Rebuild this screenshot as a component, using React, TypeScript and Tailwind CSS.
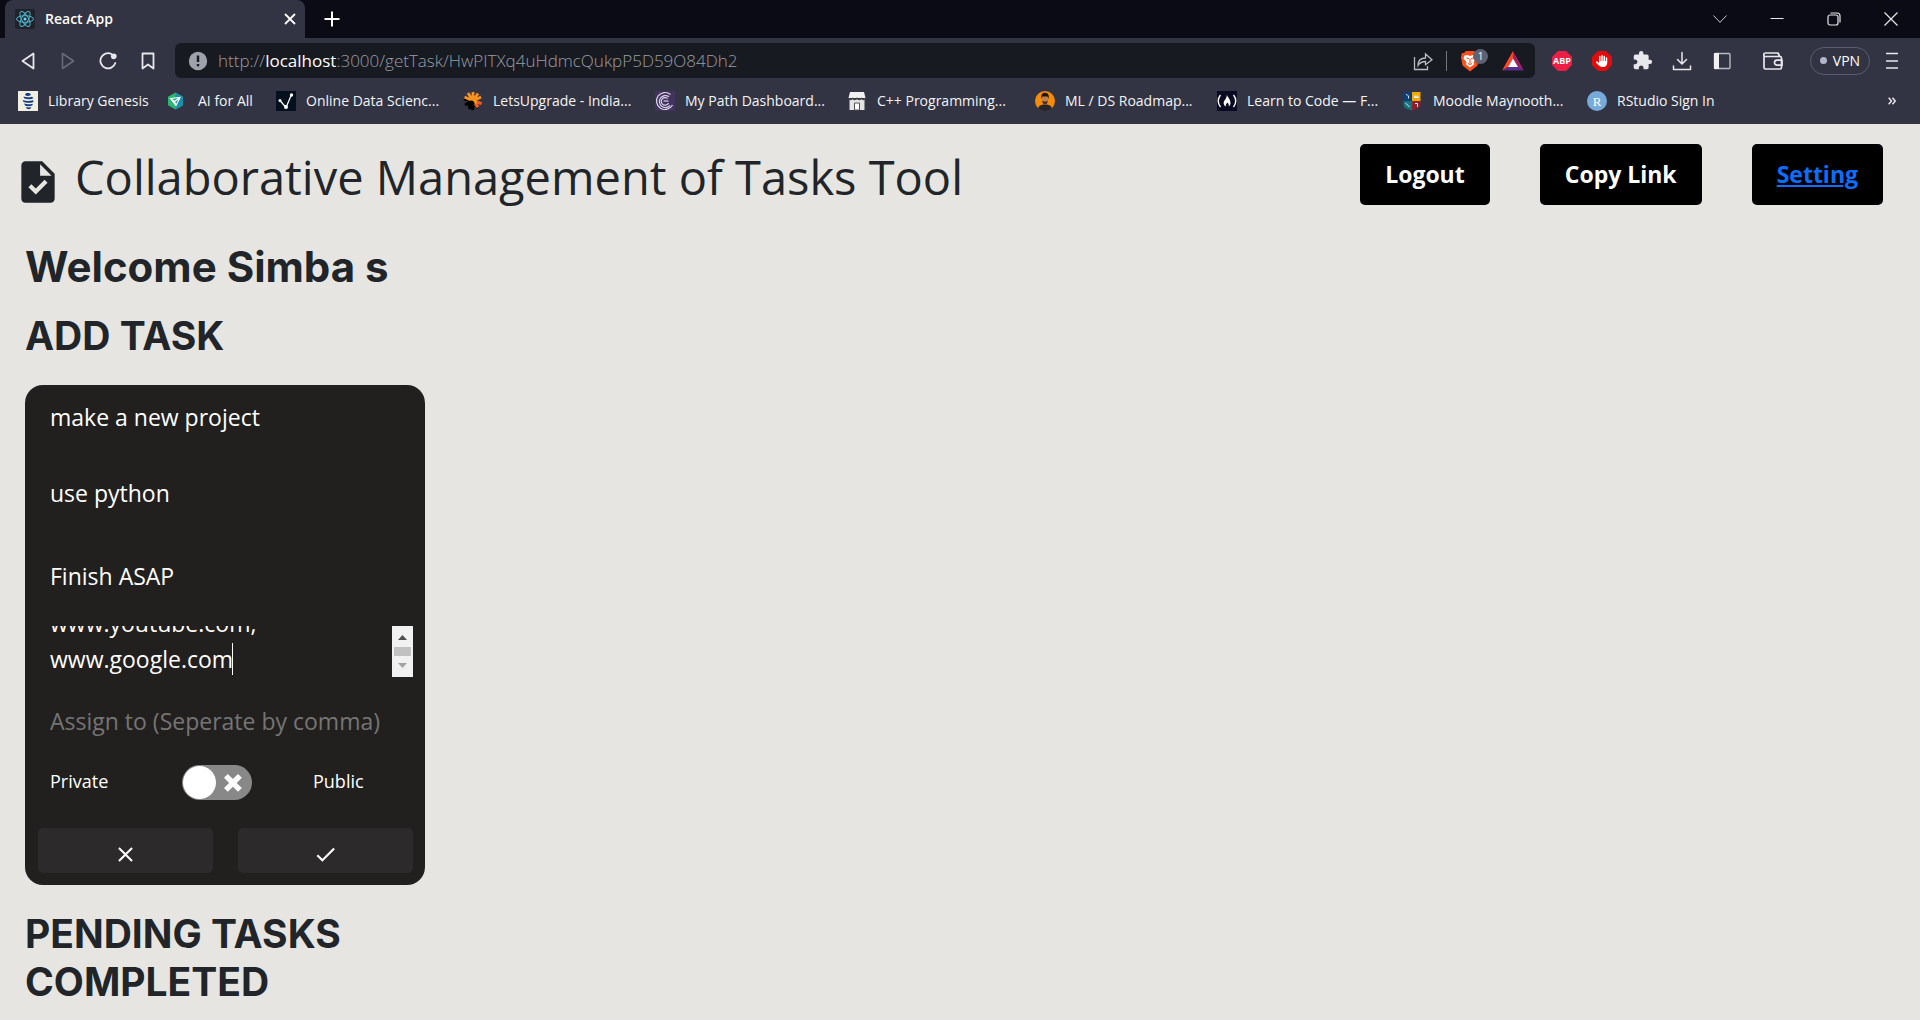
import { useState, type ReactNode } from 'react';
import { FaHand } from 'react-icons/fa6';

function ReactLogo() {
  return (
    <svg viewBox="0 0 20 20" className="size-5 shrink-0" aria-hidden="true">
      <rect width="20" height="20" rx="2" fill="#20232a" />
      <g fill="none" stroke="#4fb6cf" strokeWidth="1">
        <ellipse cx="10" cy="10" rx="8.5" ry="3.3" />
        <ellipse cx="10" cy="10" rx="8.5" ry="3.3" transform="rotate(60 10 10)" />
        <ellipse cx="10" cy="10" rx="8.5" ry="3.3" transform="rotate(120 10 10)" />
      </g>
      <circle cx="10" cy="10" r="1.5" fill="#61dafb" />
    </svg>
  );
}

type Bookmark = { label: string; width: string; icon: ReactNode };

const bookmarks: Bookmark[] = [
  {
    label: 'Library Genesis',
    width: 'w-[99px]',
    icon: (
      <>
        <rect width="20" height="20" fill="#f0efe2" />
        <path
          d="M8 2.2c2-.4 4 .2 5 1.2l-1 1.2c-1.5.7-3.5.5-5-.6zM5.500 5.500c2.500 1 5.500.9 8.500.2l1.500 1.600c-2.500 1.200-6.500 1.100-9.500 0zM4.800 9c3 1.200 7.200 1.200 10.400.2l.3 1.800c-3.500 1.300-7.500 1.100-10.200-.3zM6.200 12.600c2.500 1 5.600 1 8.600.1l-.5 1.800c-2.500.9-5.300.8-7.300-.1zM7.800 16c1.700.6 3.700.6 5.400 0l-.8 1.800c-1.200.6-2.600.5-3.600 0z"
          fill="#123a86"
        />
      </>
    ),
  },
  {
    label: 'AI for All',
    width: 'w-[57px]',
    icon: (
      <>
        <path d="M7.500 1.500l7.500 4.200v8.600l-7.500 4.200L0 14.300V5.700z" fill="#2bb673" />
        <path d="M7.500 1.500l7.500 4.200v8.600l-7.500 4.200z" fill="#1d8fa8" />
        <path d="M2.500 7.500l9.500-1L8 14.500zM2.500 7.500L6.500 10.500l1.500 4M6.500 10.500L12 6.500" fill="none" stroke="#fff" strokeWidth="1.200" />
      </>
    ),
  },
  {
    label: 'Online Data Scienc...',
    width: 'w-[136px]',
    icon: (
      <>
        <rect width="20" height="20" fill="#05101f" />
        <path d="M4 9.500l6 7 5.500-13" fill="none" stroke="#fff" strokeWidth="1.200" />
        <circle cx="4" cy="9.500" r="1.500" fill="#fff" />
        <circle cx="10" cy="16" r="2" fill="#fff" />
        <circle cx="15.500" cy="4" r="1.700" fill="#fff" />
      </>
    ),
  },
  {
    label: 'LetsUpgrade - India...',
    width: 'w-[141px]',
    icon: (
      <>
        <path d="M1 8l6 1M2 14l5-3M6 18l3-6" stroke="#000" strokeWidth="3" />
        <path d="M9.500 19l1-6M15 17l-3-4" stroke="#000" strokeWidth="3" />
        <path d="M10 10L1.500 6M10 10L5 2M10 10V1M10 10l5-7.500M10 10l8-4M10 10l8.500 2.500M10 10l5 6" stroke="#f7931e" strokeWidth="2.800" />
        <path d="M10 10l8 2.500M10 10l5 6" stroke="#f15a24" strokeWidth="2.800" />
        <circle cx="10" cy="10" r="4" fill="#f7931e" />
        <circle cx="8" cy="13" r="3.500" fill="#000" />
      </>
    ),
  },
  {
    label: 'My Path Dashboard...',
    width: 'w-[141px]',
    icon: (
      <>
        <rect width="20" height="20" fill="#43345f" />
        <g fill="none" stroke="#d9d3e6" strokeWidth="1.200">
          <path d="M15.500 3.500A8.500 8.500 0 1 0 17.500 14" />
          <path d="M14 5.800A6 6 0 1 0 15 14.500" />
          <path d="M12.500 7.500A3.800 3.800 0 1 0 13.500 12" />
          <path d="M8.500 10h5" />
        </g>
      </>
    ),
  },
  {
    label: 'C++ Programming...',
    width: 'w-[137px]',
    icon: (
      <>
        <path d="M3 1h14l1.500 6H1.500z" fill="#f1f1f1" />
        <path d="M2.500 8h15v11h-15z" fill="#e3e3e3" />
        <path d="M1.500 7c1 2 3 2 4.200.3C7 9 9 9 10 7.300 11 9 13 9 14.300 7.300 15.500 9 17.500 9 18.500 7" fill="none" stroke="#444" strokeWidth="1.200" />
        <path d="M7.500 19v-7h5v7z" fill="#fff" stroke="#555" />
      </>
    ),
  },
  {
    label: 'ML / DS Roadmap...',
    width: 'w-[131px]',
    icon: (
      <>
        <circle cx="10" cy="10" r="10" fill="#f58b0a" />
        <path d="M3 17.200c1-2.700 3-3.200 5-3.700h4c2 .5 4 1 5 3.700A10 10 0 0 1 3 17.200z" fill="#24262b" />
        <path d="M7.300 7c0-2.500 5.400-2.500 5.400 0v3c0 5-5.400 5-5.400 0z" fill="#b9805d" />
        <path d="M6.500 8C5.500 2 9 1.500 11 2c3 .3 3 3.500 2.500 6l-1-2.500h-5z" fill="#20160f" />
        <path d="M7.300 9.500c1 1.500 4.400 1.500 5.400 0 0 5.500-5.400 5.500-5.400 0z" fill="#4a2c1c" />
      </>
    ),
  },
  {
    label: 'Learn to Code — F...',
    width: 'w-[135px]',
    icon: (
      <>
        <rect width="20" height="20" fill="#0a0a23" />
        <path d="M3.500 4c-3 3.500-3 8.500 0 12M16.500 4c3 3.500 3 8.500 0 12" fill="none" stroke="#fff" strokeWidth="1.400" />
        <path d="M9.800 4c1.500 2.500 3.700 5 3.700 8 0 2-1 3-2 3.500.8-1.500.2-3-1.500-4-.3 1.300-1.500 2-1 4C7 14.500 6.500 13 6.700 11.500 7.200 9 9.800 7.500 9.800 4z" fill="#fff" />
      </>
    ),
  },
  {
    label: 'Moodle Maynooth...',
    width: 'w-[133px]',
    icon: (
      <>
        <path d="M.5 1H9v9H.5z" fill="#0f3d75" />
        <path d="M9 1h8.500v9H9z" fill="#f2a900" />
        <path d="M.5 10H9v9.500c-4-1.500-8.500-2-8.500-6z" fill="#16747f" />
        <path d="M9 10h8.500v3.500c0 4-4.500 4.500-8.500 6z" fill="#8f1f2f" />
        <path d="M3 3.500c2 0 3 2 2.500 4M11 6.500l1-2 1.200 2 1.200-2 1 2zM2.500 12l4 4M12 12.500h2.500V16" fill="none" stroke="#e8edf2" />
      </>
    ),
  },
  {
    label: 'RStudio Sign In',
    width: 'w-auto',
    icon: (
      <>
        <circle cx="10" cy="10" r="10" fill="#75aadb" />
        <text x="10" y="14.500" textAnchor="middle" fontSize="13" fontFamily="Liberation Serif, serif" fill="#fff">R</text>
      </>
    ),
  },
];

function ChromeButton({ label, children }: { label: string; children: ReactNode }) {
  return (
    <button type="button" aria-label={label} className="flex h-[35px] w-10 shrink-0 items-center justify-center">
      {children}
    </button>
  );
}

function TabStrip() {
  return (
    <div className="flex h-[38px] items-stretch pl-[5px]">
      <div className="flex w-[300px] items-center rounded-t-lg bg-[#323443] pr-[9px] pl-[10px]">
        <ReactLogo />
        <span className="ml-[10px] flex-1 text-sm font-semibold text-white">React App</span>
        <button type="button" aria-label="Close tab" className="flex size-3 items-center justify-center">
          <svg viewBox="0 0 12 12" className="size-3" stroke="#fff" strokeWidth="1.800"><path d="M1 1l10 10M11 1L1 11" /></svg>
        </button>
      </div>
      <button type="button" aria-label="New tab" className="flex w-[54px] items-center justify-center">
        <svg viewBox="0 0 16 16" className="size-4" stroke="#fff" strokeWidth="2"><path d="M8 .5v15M.5 8h15" /></svg>
      </button>
      <div className="ml-auto flex items-center text-[#e8e8ea]">
        <button type="button" aria-label="Search tabs" className="flex h-full w-[57px] items-center justify-center">
          <svg viewBox="0 0 14 8" className="h-2 w-[14px]" fill="none" stroke="#c8c8cc"><path d="M.5 .5L7 7.300 13.500.5" /></svg>
        </button>
        <button type="button" aria-label="Minimize" className="flex h-full w-[57px] items-center justify-center">
          <svg viewBox="0 0 14 14" className="size-[14px]" fill="none" stroke="currentColor"><path d="M.5 6.500h13" /></svg>
        </button>
        <button type="button" aria-label="Restore" className="flex h-full w-[57px] items-center justify-center">
          <svg viewBox="0 0 14 14" className="size-[14px]" fill="none" stroke="currentColor" strokeWidth="1.200">
            <rect x="1" y="3" width="10" height="10" rx="2" />
            <path d="M3.500 1h6.500a3 3 0 0 1 3 3v6.500" />
          </svg>
        </button>
        <button type="button" aria-label="Close window" className="flex h-full w-[58px] items-center justify-center">
          <svg viewBox="0 0 14 14" className="size-[14px]" fill="none" stroke="currentColor" strokeWidth="1.200"><path d="M.5 .5l13 13M13.500.5l-13 13" /></svg>
        </button>
      </div>
    </div>
  );
}

function AddressBar() {
  return (
    <div className="ml-[7px] flex h-[35px] flex-1 items-center rounded-md bg-[#171a21] pr-[11px] pl-[13px]">
      <svg viewBox="0 0 20 20" className="size-5 shrink-0" role="img" aria-label="Not secure">
        <circle cx="10" cy="10" r="9.200" fill="#9fa1ab" />
        <path d="M10 4.500v6.500M10 13v2.200" stroke="#171a21" strokeWidth="2.400" />
      </svg>
      <div className="ml-[10px] flex-1 text-[17px] font-light whitespace-nowrap text-[#9a9ca3]">
        http://<span className="font-normal text-white">localhost</span>:3000/getTask/HwPITXq4uHdmcQukpP5D59O84Dh2
      </div>
      <button type="button" aria-label="Share page">
        <svg viewBox="0 0 20 20" className="size-5" fill="none" stroke="#b9bbc2" strokeWidth="1.300">
          <path d="M1.500 6v12.500h13V15" />
          <path d="M5 14.500c0-5 3-7.500 7.500-7.500V3l6.500 5.800-6.500 5V10.500c-3.500 0-5.500 1-7.500 4z" />
        </svg>
      </button>
      <span className="ml-[13px] h-5 w-px bg-[#74767f]" />
      <button type="button" aria-label="Brave Shields" className="relative ml-[13px] flex w-[28px] items-center">
        <svg viewBox="0 0 20 22" className="h-[22px] w-5" aria-hidden="true">
          <path d="M6 1h8l2 2 2 0 1 4-1.500 8.500L10 21.500l-7.500-6L1 7l1-4h2z" fill="#fb4f1c" />
          <path d="M4.500 5.500l3-.5L10 6l2.500-1 3 .5 1 3-3 3.800.7 2L10 17.500l-4.200-3.200.7-2-3-3.800z" fill="#fff" />
          <path d="M6.500 8l2.500.8M13.500 8L11 8.800M10 9v4M8 13.500l2 1 2-1" stroke="#fb4f1c" fill="none" strokeWidth="1.100" />
        </svg>
        <span className="absolute -top-px right-0 flex size-[15px] items-center justify-center rounded-full bg-[#5f6270] text-[10px] text-white">1</span>
      </button>
      <button type="button" aria-label="Brave Rewards" className="ml-[14px]">
        <svg viewBox="0 0 22 20" className="h-5 w-[22px]">
          <path d="M11 0L0 19.500l6-3.500 5-8.500z" fill="#ff4724" />
          <path d="M11 0l11 19.500-6-3.500-5-8.500z" fill="#9e1f63" />
          <path d="M0 19.500h22L16 16H6z" fill="#5b2d90" />
          <path d="M11 7.500L16 16H6z" fill="#fff" />
        </svg>
      </button>
    </div>
  );
}

function Toolbar() {
  return (
    <div className="flex items-center pt-[5px] pr-[18px] pl-2">
      <ChromeButton label="Back">
        <svg viewBox="0 0 14 18" className="h-[18px] w-[14px]" fill="none" stroke="#e8e8ec" strokeWidth="1.800" strokeLinejoin="round"><path d="M12.500 1.500v15L1.500 9z" /></svg>
      </ChromeButton>
      <ChromeButton label="Forward">
        <svg viewBox="0 0 14 18" className="h-[18px] w-[14px]" fill="none" stroke="#686a77" strokeWidth="1.600" strokeLinejoin="round"><path d="M1.500 1.500v15l11-7.500z" /></svg>
      </ChromeButton>
      <ChromeButton label="Reload">
        <svg viewBox="0 0 18 18" className="size-[18px]" fill="none" stroke="#e8e8ec" strokeWidth="1.800" strokeLinecap="round">
          <path d="M12.500 2A7.600 7.600 0 1 0 16.300 11" />
          <circle cx="14.800" cy="4.300" r="2" fill="#e8e8ec" />
        </svg>
      </ChromeButton>
      <ChromeButton label="Bookmark this tab">
        <svg viewBox="0 0 14 18" className="h-[18px] w-[14px]" fill="none" stroke="#e8e8ec" strokeWidth="1.800" strokeLinejoin="round"><path d="M1.500 1.500h11v15L7 12.500l-5.500 4z" /></svg>
      </ChromeButton>
      <AddressBar />
      <div className="ml-[7px] flex items-center">
        <ChromeButton label="Adblock Plus">
          <svg viewBox="0 0 20 20" className="size-5">
            <path d="M6 0h8l6 6v8l-6 6H6l-6-6V6z" fill="#ed1e45" />
            <text x="10" y="13.300" textAnchor="middle" fontSize="9" fontWeight="700" fontFamily="Open Sans, sans-serif" fill="#fff">ABP</text>
          </svg>
        </ChromeButton>
        <ChromeButton label="AdBlock">
          <span className="grid place-items-center *:[grid-area:1/1]">
            <svg viewBox="0 0 20 20" className="size-5"><path d="M6 0h8l6 6v8l-6 6H6l-6-6V6z" fill="#e30b0b" /></svg>
            <FaHand className="size-3 text-white" />
          </span>
        </ChromeButton>
        <ChromeButton label="Extensions">
          <svg viewBox="0 0 24 24" className="size-[21px]" fill="#e8e8ec"><path d="M20.500 11H19V7c0-1.100-.9-2-2-2h-4V3.500a2.500 2.500 0 0 0-5 0V5H4c-1.100 0-1.990.9-1.990 2v3.800H3.500c1.490 0 2.700 1.210 2.700 2.700s-1.210 2.700-2.700 2.700H2V20c0 1.100.9 2 2 2h3.800v-1.500c0-1.490 1.210-2.700 2.700-2.700s2.700 1.210 2.700 2.700V22H17c1.100 0 2-.9 2-2v-4h1.500a2.500 2.500 0 0 0 0-5z" /></svg>
        </ChromeButton>
        <ChromeButton label="Downloads">
          <svg viewBox="0 0 20 20" className="size-5" fill="none" stroke="#e8e8ec" strokeWidth="1.500" strokeLinecap="round" strokeLinejoin="round"><path d="M10 1.500v11M5.500 8.500l4.500 4.500 4.500-4.500M1.500 15v3.500h17V15" /></svg>
        </ChromeButton>
        <ChromeButton label="Sidebar">
          <svg viewBox="0 0 18 18" className="size-[18px]"><rect x="1.500" y="1.500" width="15.500" height="15" rx="1" fill="none" stroke="#b9bbc4" strokeWidth="1.400" /><path d="M1 1h5v16H1z" fill="#f0f0f2" /></svg>
        </ChromeButton>
      </div>
      <div className="ml-[11px] flex items-center">
        <ChromeButton label="Wallet">
          <svg viewBox="0 0 20 18" className="h-[18px] w-5" fill="none" stroke="#e8e8ec" strokeWidth="1.700" strokeLinejoin="round">
            <path d="M1 3v12.500a1.500 1.500 0 0 0 1.500 1.500H17a1.500 1.500 0 0 0 1.500-1.500V6A1.500 1.500 0 0 0 17 4.500H2.500A1.500 1.500 0 0 1 2.500 1H15l1.500 3" />
            <path d="M19 8.200h-5a2.500 2.500 0 0 0 0 5h5z" />
          </svg>
        </ChromeButton>
        <button type="button" className="ml-[17px] flex h-7 w-[60px] items-center justify-center gap-[6px] rounded-full border border-[#5b5d70] text-sm text-white">
          <span className="size-[7px] rounded-full bg-[#b4b5c8]" />
          VPN
        </button>
        <button type="button" aria-label="Menu" className="ml-[12px] flex h-[35px] w-5 items-center justify-center">
          <svg viewBox="0 0 12 18" className="h-[18px] w-3" stroke="#e8e8ec" strokeWidth="1.700"><path d="M0 1.500h12M0 9h12M0 16h12" /></svg>
        </button>
      </div>
    </div>
  );
}

function BookmarksBar() {
  return (
    <nav aria-label="Bookmarks" className="flex h-[46px] items-center pr-6 pl-[18px]">
      <div className="flex items-center gap-[21px]">
        {bookmarks.map((b) => (
          <a key={b.label} href="#" className="flex items-center gap-[10px] text-sm whitespace-nowrap text-[#f4f4f6]">
            <svg viewBox="0 0 20 20" className="size-5 shrink-0" aria-hidden="true">{b.icon}</svg>
            <span className={b.width}>{b.label}</span>
          </a>
        ))}
      </div>
      <button type="button" aria-label="More bookmarks" className="ml-auto">
        <svg viewBox="0 0 8 8" className="size-2" fill="none" stroke="#e8e8ec" strokeWidth="1.500"><path d="M.7.7L3.500 4 .7 7.300M4.500.7L7.300 4 4.500 7.300" /></svg>
      </button>
    </nav>
  );
}

const actionClass = 'flex h-[61px] items-center rounded-[5px] bg-black px-[25px] text-[23px] font-bold whitespace-nowrap';
const fieldClass = 'block w-full bg-transparent px-[25px] text-[23px] text-white outline-none placeholder:text-[#757575]';

function TaskCard() {
  const [isPublic, setIsPublic] = useState(false);
  return (
    <form className="mt-[25px] w-[400px] rounded-[18px] bg-[#22201f] pb-3" onSubmit={(e) => e.preventDefault()}>
      <input aria-label="Title" defaultValue="make a new project" className={`${fieldClass} h-16`} />
      <input aria-label="Description" defaultValue="use python" className={`${fieldClass} h-[88px]`} />
      <input aria-label="Note" defaultValue="Finish ASAP" className={`${fieldClass} h-[78px]`} />
      <div className="relative mt-[11px] mr-3 flex h-[51px]">
        <textarea
          aria-label="Links"
          defaultValue={'www.youtube.com,\nwww.google.com'}
          ref={(el) => {
            if (el) el.scrollTop = 21;
          }}
          className={`${fieldClass} h-full resize-none leading-[36px] [scrollbar-width:none]`}
        />
        <span className="absolute top-[17px] left-[207px] h-8 w-px bg-white" />
        <div className="flex w-[21px] shrink-0 flex-col items-center justify-between bg-[#f1f1f1] py-[9px]" aria-hidden="true">
          <svg viewBox="0 0 9 5" className="h-[5px] w-[9px]"><path d="M0 5L4.500 0 9 5z" fill="#505050" /></svg>
          <span className="h-[9px] w-[17px] bg-[#c1c1c1]" />
          <svg viewBox="0 0 9 5" className="h-[5px] w-[9px]"><path d="M0 0l4.500 5L9 0z" fill="#a3a3a3" /></svg>
        </div>
      </div>
      <input aria-label="Assign to" placeholder="Assign to (Seperate by comma)" className={`${fieldClass} h-[88px]`} />
      <div className="flex h-[35px] items-center pl-[25px] text-lg text-white">
        <span className="w-[132px] pb-1">Private</span>
        <label className="relative flex h-[35px] w-[70px] items-center rounded-full bg-[#888888] has-checked:bg-[#008800]">
          <input type="checkbox" role="switch" aria-label="Public" checked={isPublic} onChange={(e) => setIsPublic(e.target.checked)} className="peer sr-only" />
          <span className="ml-px size-[33px] rounded-full bg-white peer-checked:ml-9" />
          <svg viewBox="0 0 10 10" className="ml-2 size-[18px] peer-checked:hidden" aria-hidden="true">
            <path d="M9.900 2.120L7.780 0 4.950 2.828 2.120 0 0 2.120l2.830 2.830L0 7.776 2.123 9.900 4.950 7.070 7.780 9.900 9.900 7.776 7.072 4.950 9.900 2.120" fill="#fff" />
          </svg>
        </label>
        <span className="ml-[61px] pb-1">Public</span>
      </div>
      <div className="mt-7 grid grid-cols-2 gap-[25px] pr-3 pl-[13px]">
        <button type="button" aria-label="Cancel" className="flex h-[45px] items-center justify-center rounded-[5px] bg-[#2d2a2b] pt-2">
          <svg viewBox="0 0 24 24" className="size-[25px]" fill="#fff"><path d="M19 6.410L17.590 5 12 10.590 6.410 5 5 6.410 10.590 12 5 17.590 6.410 19 12 13.410 17.590 19 19 17.590 13.410 12z" /></svg>
        </button>
        <button type="submit" aria-label="Save task" className="flex h-[45px] items-center justify-center rounded-[5px] bg-[#2d2a2b] pt-2">
          <svg viewBox="0 0 24 24" className="size-[25px]" fill="#fff"><path d="M9 16.170L4.830 12l-1.420 1.410L9 19 21 7l-1.410-1.410z" /></svg>
        </button>
      </div>
    </form>
  );
}

export default function App() {
  return (
    <div className="min-h-screen bg-[#e6e5e1] font-['Open_Sans','Noto_Sans',sans-serif] text-[#212529]">
      <header className="bg-[#0a0b14]">
        <TabStrip />
        <div className="bg-[#323443]">
          <Toolbar />
          <BookmarksBar />
        </div>
      </header>
      <main>
        <div className="flex items-start justify-between gap-12 pt-5 pr-[37px] pl-[13px]">
          <div className="flex items-start gap-3">
            <svg viewBox="0 0 24 24" className="mt-[13px] size-[50px] shrink-0" fill="currentColor" aria-hidden="true">
              <path d="M14 2H6c-1.100 0-1.990.9-1.990 2L4 20c0 1.100.89 2 1.990 2H18c1.100 0 2-.9 2-2V8l-6-6zm-3.060 16L7.400 14.460l1.410-1.410 2.120 2.120 4.240-4.240 1.410 1.410L10.940 18zM13 9V3.500L18.500 9H13z" />
            </svg>
            <h1 className="text-[47px] leading-[66px] font-normal">Collaborative Management of Tasks Tool</h1>
          </div>
          <div className="flex gap-[50px]">
            <button type="button" className={`${actionClass} text-white`}>Logout</button>
            <button type="button" className={`${actionClass} text-white`}>Copy Link</button>
            <a href="#" className={`${actionClass} text-[#0d6efd] underline`}>Setting</a>
          </div>
        </div>
        <div className="px-[25px] pb-[14px] font-['Inter',sans-serif]">
          <h2 className="mt-[33px] text-[42px] leading-[48px] font-bold">Welcome Simba s</h2>
          <h2 className="mt-[21px] text-[39px] leading-[48px] font-bold">ADD TASK</h2>
          <div className="font-['Open_Sans','Noto_Sans',sans-serif]">
            <TaskCard />
          </div>
          <h2 className="mt-[25px] text-[39px] leading-[48px] font-bold">PENDING TASKS</h2>
          <h2 className="text-[39px] leading-[48px] font-bold">COMPLETED</h2>
        </div>
      </main>
    </div>
  );
}
